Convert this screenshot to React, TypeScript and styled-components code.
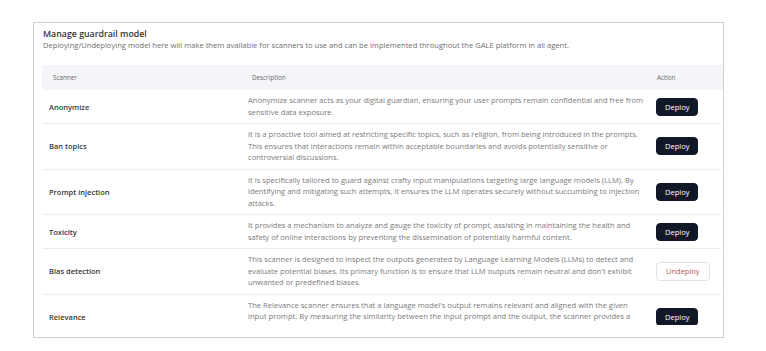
import styled, { createGlobalStyle } from 'styled-components';

const GlobalStyle = createGlobalStyle`
    html, body {
        margin: 0;
        padding: 0;
        background: #ffffff;
    }
    body {
        font-family: "Open Sans", "Noto Sans", Arial, sans-serif;
        -webkit-font-smoothing: antialiased;
    }
`;

type Scanner = {
    name: string;
    description: string;
    deployed: boolean;
};

const scanners: Scanner[] = [
    {
        name: 'Anonymize',
        description:
            'Anonymize scanner acts as your digital guardian, ensuring your user prompts remain confidential and free from sensitive data exposure.',
        deployed: false,
    },
    {
        name: 'Ban topics',
        description:
            'It is a proactive tool aimed at restricting specific topics, such as religion, from being introduced in the prompts. This ensures that interactions remain within acceptable boundaries and avoids potentially sensitive or controversial discussions.',
        deployed: false,
    },
    {
        name: 'Prompt injection',
        description:
            'It is specifically tailored to guard against crafty input manipulations targeting large language models (LLM). By identifying and mitigating such attempts, it ensures the LLM operates securely without succumbing to injection attacks.',
        deployed: false,
    },
    {
        name: 'Toxicity',
        description:
            'It provides a mechanism to analyze and gauge the toxicity of prompt, assisting in maintaining the health and safety of online interactions by preventing the dissemination of potentially harmful content.',
        deployed: false,
    },
    {
        name: 'Bias detection',
        description:
            "This scanner is designed to inspect the outputs generated by Language Learning Models (LLMs) to detect and evaluate potential biases. Its primary function is to ensure that LLM outputs remain neutral and don't exhibit unwanted or predefined biases.",
        deployed: true,
    },
    {
        name: 'Relevance',
        description:
            "The Relevance scanner ensures that a language model's output remains relevant and aligned with the given input prompt. By measuring the similarity between the input prompt and the output, the scanner provides a confidence score.",
        deployed: false,
    },
];

export default function App() {
    return (
        <>
            <GlobalStyle />
            <Panel>
                <Title>Manage guardrail model</Title>
                <Subtitle>
                    Deploying/Undeploying model here will make them available for scanners to use and can be
                    implemented throughout the GALE platform in all agent.
                </Subtitle>
                <TableScroll>
                    <HeaderRow>
                        <HeaderCell $indent={11}>Scanner</HeaderCell>
                        <HeaderCell $indent={4}>Description</HeaderCell>
                        <HeaderCell $indent={1}>Action</HeaderCell>
                    </HeaderRow>
                    {scanners.map((s) => (
                        <Row key={s.name}>
                            <NameCell>{s.name}</NameCell>
                            <DescriptionCell>{s.description}</DescriptionCell>
                            <ActionCell>
                                <ActionButton $deployed={s.deployed}>
                                    {s.deployed ? 'Undeploy' : 'Deploy'}
                                </ActionButton>
                            </ActionCell>
                        </Row>
                    ))}
                </TableScroll>
            </Panel>
        </>
    );
}

const Panel = styled.section`
    box-sizing: border-box;
    width: 691px;
    height: 316px;
    margin: 22px 0 0 33px;
    padding: 5px 0 12px 8px;
    border: 1px solid #cfcfcf;
    background: #ffffff;
    display: flex;
    flex-direction: column;
`;

const Title = styled.h2`
    margin: 0 0 0 1px;
    font-size: 8.8px;
    line-height: 12px;
    font-weight: 600;
    color: #333333;
`;

const Subtitle = styled.p`
    margin: 0 0 14px 1px;
    font-size: 7.6px;
    line-height: 11px;
    color: #6f6f6f;
`;

const TableScroll = styled.div`
    flex: 1;
    overflow: hidden;
`;

const columns = '206px 408px 1fr';

const HeaderRow = styled.div`
    display: grid;
    grid-template-columns: ${columns};
    align-items: center;
    height: 25px;
    background: #f4f5f8;
`;

const HeaderCell = styled.div<{ $indent: number }>`
    padding-left: ${({ $indent }) => $indent}px;
    font-size: 6.3px;
    color: #6a6a6a;
`;

const Row = styled.div`
    display: grid;
    grid-template-columns: ${columns};
    align-items: center;
    padding: 5px 0;
    margin-right: 2px;
    border-bottom: 1px solid #ececec;

    &:first-of-type {
        padding-top: 3px;
    }
`;

const NameCell = styled.div`
    padding-left: 7px;
    font-size: 7.5px;
    font-weight: 600;
    color: #383838;
`;

const DescriptionCell = styled.div`
    padding-right: 11px;
    font-size: 7.6px;
    line-height: 11.5px;
    color: #7a7a7a;
`;

const ActionCell = styled.div`
    display: flex;
    align-items: center;
`;

const ActionButton = styled.button<{ $deployed: boolean }>`
    box-sizing: border-box;
    height: ${({ $deployed }) => ($deployed ? '19px' : '18px')};
    padding: 0 ${({ $deployed }) => ($deployed ? '9px' : '8px')};
    border-radius: 4px;
    border: 1px solid ${({ $deployed }) => ($deployed ? '#eadede' : '#111827')};
    background: ${({ $deployed }) => ($deployed ? '#ffffff' : '#111827')};
    color: ${({ $deployed }) => ($deployed ? '#b5595a' : '#ffffff')};
    font-family: inherit;
    font-size: 7.5px;
    cursor: pointer;
`;
